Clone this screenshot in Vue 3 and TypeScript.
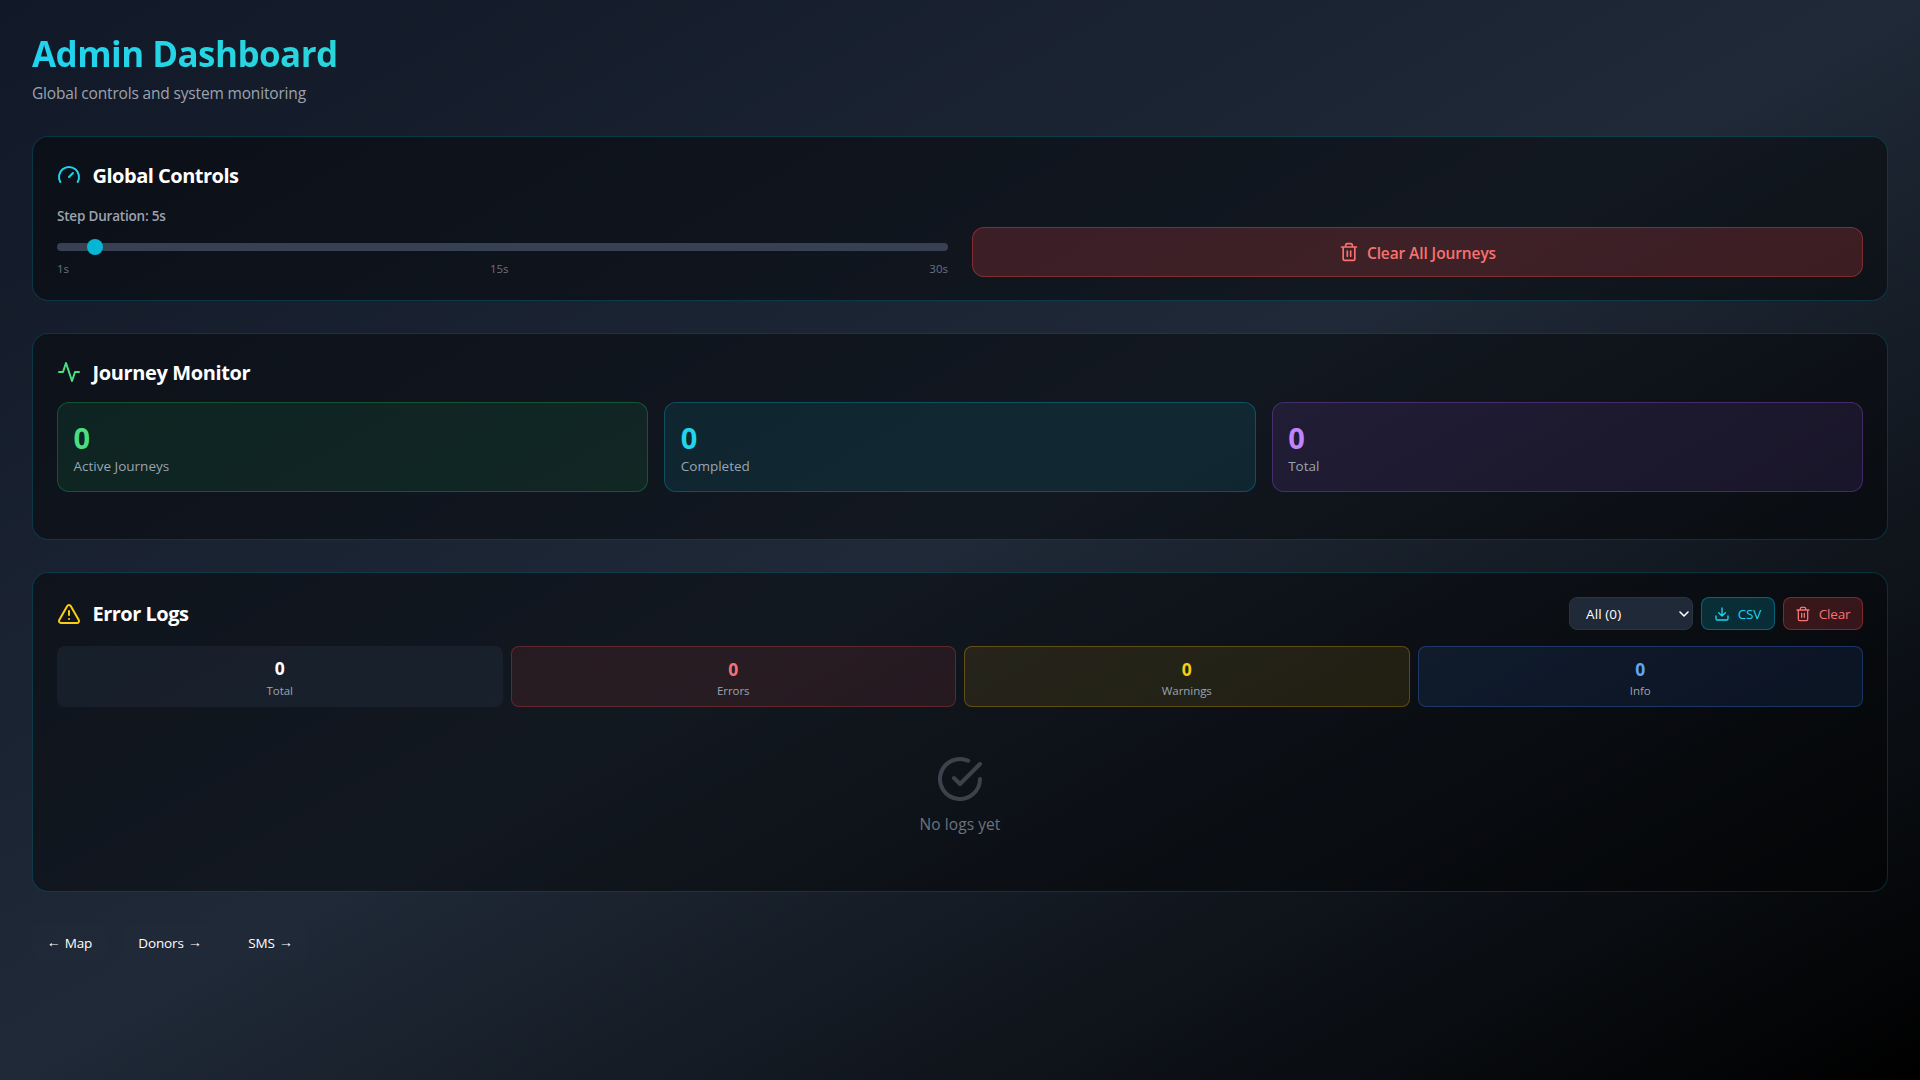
<script setup lang="ts">
import { ref } from 'vue'

const duration = ref(5)
const position = ref(2)
const ticks = ['1s', '15s', '30s']

const journeys = [
  { value: 0, label: 'Active Journeys', tone: 'green' },
  { value: 0, label: 'Completed', tone: 'cyan' },
  { value: 0, label: 'Total', tone: 'purple' },
]

const logs = [
  { value: 0, label: 'Total', tone: 'plain' },
  { value: 0, label: 'Errors', tone: 'red' },
  { value: 0, label: 'Warnings', tone: 'yellow' },
  { value: 0, label: 'Info', tone: 'blue' },
]

const links = [
  { before: '←', label: 'Map', after: '', width: 75 },
  { before: '', label: 'Donors', after: '→', width: 94 },
  { before: '', label: 'SMS', after: '→', width: 75 },
]
</script>

<template>
  <div class="page">
    <header>
      <h1><span>Admin Dashboard</span></h1>
      <p class="subtitle">Global controls and system monitoring</p>
    </header>

    <section class="card controls">
      <h2>
        <svg class="icon cyan-text" viewBox="0 0 24 24"><path d="M12 14l4-4M3.34 19a10 10 0 1 1 17.32 0" /></svg>
        <span>Global Controls</span>
      </h2>
      <div class="controls-grid">
        <div class="slider-box">
          <label for="duration">Step Duration: {{ duration }}s</label>
          <input id="duration" v-model.number="position" type="range" min="1" max="30" />
          <div class="ticks"><span v-for="t in ticks" :key="t">{{ t }}</span></div>
        </div>
        <button class="clear-all">
          <svg class="icon-sm" viewBox="0 0 24 24"><path d="M3 6h18M19 6v14a2 2 0 0 1-2 2H7a2 2 0 0 1-2-2V6M8 6V4a2 2 0 0 1 2-2h4a2 2 0 0 1 2 2v2M10 11v6M14 11v6" /></svg>
          <span>Clear All Journeys</span>
        </button>
      </div>
    </section>

    <section class="card monitor">
      <h2>
        <svg class="icon green-text" viewBox="0 0 24 24"><path d="M22 12h-4l-3 9L9 3l-3 9H2" /></svg>
        <span>Journey Monitor</span>
      </h2>
      <div class="journeys">
        <div v-for="j in journeys" :key="j.label" class="tile" :class="j.tone">
          <div class="big">{{ j.value }}</div>
          <div class="caption">{{ j.label }}</div>
        </div>
      </div>
    </section>

    <section class="card errors">
      <div class="log-head">
        <h2>
          <svg class="icon yellow-text" viewBox="0 0 24 24"><path d="M21.73 18l-8-14a2 2 0 0 0-3.48 0l-8 14A2 2 0 0 0 4 21h16a2 2 0 0 0 1.73-3M12 9v4M12 17h.01" /></svg>
          <span>Error Logs</span>
        </h2>
        <div class="actions">
          <div class="select">
            <span>All (0)</span>
            <svg viewBox="0 0 10 6"><path d="M1 1l4 4 4-4" /></svg>
          </div>
          <button class="csv">
            <svg class="icon-xs" viewBox="0 0 24 24"><path d="M21 15v4a2 2 0 0 1-2 2H5a2 2 0 0 1-2-2v-4M7 10l5 5 5-5M12 15V3" /></svg>
            <span>CSV</span>
          </button>
          <button class="clear">
            <svg class="icon-xs" viewBox="0 0 24 24"><path d="M3 6h18M19 6v14a2 2 0 0 1-2 2H7a2 2 0 0 1-2-2V6M8 6V4a2 2 0 0 1 2-2h4a2 2 0 0 1 2 2v2M10 11v6M14 11v6" /></svg>
            <span>Clear</span>
          </button>
        </div>
      </div>
      <div class="log-stats">
        <div v-for="l in logs" :key="l.label" class="stat" :class="l.tone">
          <div class="mid">{{ l.value }}</div>
          <div class="small">{{ l.label }}</div>
        </div>
      </div>
      <div class="empty">
        <svg viewBox="0 0 24 24"><path d="M21.99 12A10 10 0 1 1 16.1 2.88M22 4.5L12 14.5l-3-3" /></svg>
        <p>No logs yet</p>
      </div>
    </section>

    <nav>
      <a v-for="l in links" :key="l.label" :style="{ width: l.width + 'px' }">
        <span v-if="l.before" class="arrow">{{ l.before }}</span>
        <span>{{ l.label }}</span>
        <span v-if="l.after" class="arrow">{{ l.after }}</span>
      </a>
    </nav>
  </div>
</template>

<style>
body {
  margin: 0;
  background: #000;
}
</style>

<style scoped>
* {
  box-sizing: border-box;
  margin: 0;
}

.page {
  min-height: 1080px;
  padding: 32px;
  background: linear-gradient(to bottom right, #111827, #1f2937, #000);
  color: #fff;
  font-family: 'Segoe UI', 'Open Sans', 'Noto Sans', sans-serif;
  font-size: 16px;
  line-height: 24px;
}

svg {
  display: block;
  flex: none;
  fill: none;
  stroke: currentColor;
  stroke-width: 2;
  stroke-linecap: round;
  stroke-linejoin: round;
}

h1 {
  height: 40px;
  margin-bottom: 8px;
  font-size: 35px;
  line-height: 44px;
  font-weight: 700;
  letter-spacing: -0.55px;
}

h1 span {
  display: inline-block;
  height: 46px;
  background: linear-gradient(to right, #22d3ee, #2ad5da);
  -webkit-background-clip: text;
  background-clip: text;
  color: transparent;
}

.subtitle {
  height: 24px;
  margin-bottom: 32px;
  color: #9ca3af;
  font-size: 15.5px;
  line-height: 26px;
  letter-spacing: -0.17px;
}

.card {
  margin-bottom: 32px;
  padding: 24px;
  border: 1px solid rgba(6, 182, 212, 0.23);
  border-radius: 16px;
  background: rgba(0, 0, 0, 0.4);
}

.controls {
  height: 165px;
}

.monitor {
  height: 207px;
}

.errors {
  height: 320px;
}

h2 {
  display: flex;
  align-items: center;
  gap: 11.5px;
  height: 28px;
  margin-bottom: 16px;
  font-size: 20px;
  line-height: 28px;
  font-weight: 700;
  letter-spacing: -0.5px;
}

h2 span {
  padding-top: 2px;
}

.monitor h2 {
  letter-spacing: -0.38px;
}

.errors h2 span {
  padding-top: 0;
}

.icon {
  width: 24px;
  height: 24px;
}

.cyan-text {
  color: #22d3ee;
}

.green-text {
  color: #4ade80;
}

.yellow-text {
  color: #facc15;
}

.controls-grid {
  display: grid;
  grid-template-columns: 1fr 1fr;
  gap: 24px;
  align-items: end;
}

label {
  display: block;
  height: 20px;
  margin-bottom: 18px;
  color: #9ca3af;
  font-size: 13.5px;
  line-height: 22px;
  font-weight: 600;
  letter-spacing: -0.2px;
}

input[type='range'] {
  display: block;
  width: 100%;
  height: 8px;
  margin: 0 0 10px;
  border-radius: 8px;
  background: #374151;
  appearance: none;
  outline: none;
}

input[type='range']::-webkit-slider-thumb {
  width: 16px;
  height: 16px;
  border-radius: 50%;
  background: #06b6d4;
  appearance: none;
}

.ticks {
  display: flex;
  justify-content: space-between;
  color: #6b7280;
  font-size: 11.5px;
  line-height: 16px;
}

button {
  display: flex;
  align-items: center;
  justify-content: center;
  gap: 8px;
  font-family: inherit;
}

.clear-all {
  height: 50px;
  border: 1px solid rgba(239, 68, 68, 0.4);
  border-radius: 12px;
  background: rgba(239, 68, 68, 0.2);
  color: #f87171;
  font-size: 15.5px;
  font-weight: 600;
  letter-spacing: -0.1px;
}

.clear-all span {
  padding-top: 2px;
}

.icon-sm {
  width: 20px;
  height: 20px;
}

.icon-xs {
  width: 16px;
  height: 16px;
}

.journeys {
  display: grid;
  grid-template-columns: repeat(3, 1fr);
  gap: 16px;
}

.tile {
  height: 90px;
  padding: 16px 15.5px;
  border: 1px solid;
  border-radius: 12px;
}

.big {
  height: 36px;
  font-size: 29px;
  line-height: 38px;
  font-weight: 700;
}

.caption {
  color: #9ca3af;
  font-size: 13.5px;
  line-height: 22px;
}

.tile.green {
  border-color: rgba(34, 197, 94, 0.3);
  background: rgba(34, 197, 94, 0.1);
}

.tile.cyan {
  border-color: rgba(6, 182, 212, 0.3);
  background: rgba(6, 182, 212, 0.1);
}

.tile.purple {
  border-color: rgba(168, 85, 247, 0.3);
  background: rgba(168, 85, 247, 0.1);
}

.green .big {
  color: #4ade80;
}

.cyan .big {
  color: #22d3ee;
}

.purple .big {
  color: #c084fc;
}

.log-head {
  display: flex;
  justify-content: space-between;
  align-items: center;
  height: 33px;
  margin-bottom: 16px;
}

.log-head h2 {
  margin: 0;
}

.actions {
  display: flex;
  gap: 8px;
}

.select {
  display: flex;
  align-items: center;
  justify-content: space-between;
  width: 124px;
  height: 33px;
  padding: 0 3px 0 16px;
  border: 1px solid #2b3442;
  border-radius: 8px;
  background: #1f2937;
  font-size: 13.5px;
  letter-spacing: 0.1px;
}

.select svg {
  width: 10px;
  height: 6px;
  stroke-width: 1.6;
}

.csv,
.clear {
  height: 33px;
  padding: 0 1px 0 0;
  border: 1px solid;
  border-radius: 8px;
  font-size: 13.5px;
  letter-spacing: -0.2px;
}

.csv {
  width: 74px;
  border-color: rgba(6, 182, 212, 0.4);
  background: rgba(6, 182, 212, 0.2);
  color: #22d3ee;
}

.clear {
  width: 80px;
  border-color: rgba(239, 68, 68, 0.4);
  background: rgba(239, 68, 68, 0.2);
  color: #f87171;
}

.log-stats {
  display: grid;
  grid-template-columns: repeat(4, 1fr);
  gap: 8px;
}

.stat {
  height: 61px;
  padding: 8px;
  border: 1px solid;
  border-radius: 8px;
  text-align: center;
}

.mid {
  height: 28px;
  font-size: 17.5px;
  line-height: 28px;
  font-weight: 700;
}

.small {
  color: #9ca3af;
  font-size: 11.5px;
  line-height: 16px;
  letter-spacing: -0.05px;
}

.stat.plain {
  border-color: transparent;
  background: rgba(31, 41, 55, 0.5);
}

.plain .mid {
  line-height: 26px;
}

.stat.red {
  border-color: rgba(239, 68, 68, 0.3);
  background: rgba(239, 68, 68, 0.1);
}

.stat.yellow {
  border-color: rgba(234, 179, 8, 0.3);
  background: rgba(234, 179, 8, 0.1);
}

.stat.blue {
  border-color: rgba(59, 130, 246, 0.3);
  background: rgba(59, 130, 246, 0.1);
}

.red .mid {
  color: #f87171;
}

.yellow .mid {
  color: #facc15;
}

.blue .mid {
  color: #60a5fa;
}

.empty {
  display: flex;
  flex-direction: column;
  align-items: center;
  padding-top: 48px;
  color: #6b7280;
}

.empty svg {
  width: 48px;
  height: 48px;
  margin-bottom: 9px;
  opacity: 0.5;
}

.empty p {
  font-size: 15.5px;
  letter-spacing: 0.08px;
}

nav {
  display: flex;
  gap: 16px;
}

nav a {
  display: flex;
  justify-content: center;
  gap: 4px;
  height: 36px;
  border-radius: 8px;
  background: rgba(31, 41, 55, 0.5);
  font-size: 13.5px;
  line-height: 39px;
  letter-spacing: -0.1px;
}

.arrow {
  font-family: 'Liberation Sans', sans-serif;
  font-size: 14px;
  line-height: 36px;
}
</style>
